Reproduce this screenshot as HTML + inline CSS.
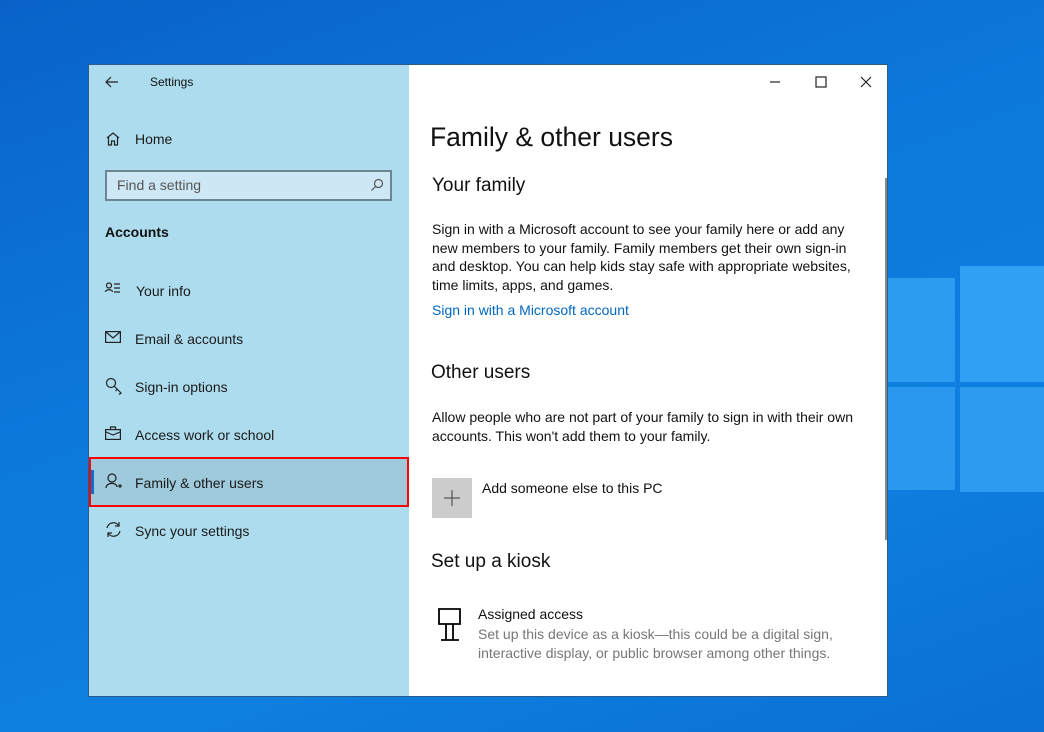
<!DOCTYPE html>
<html><head><style>
*{margin:0;padding:0;box-sizing:border-box}
body{width:1044px;height:732px;overflow:hidden;position:relative;font-family:"Liberation Sans",sans-serif;background:linear-gradient(160deg,#0a62c9 0%,#0c78dc 40%,#0e7fe0 70%,#0b6fd5 100%)}
.p{position:absolute;background:#2a9af0}
.win{position:absolute;left:88px;top:64px;width:800px;height:633px;border:1px solid #2b5d88;background:#fff}
.left{position:absolute;left:0;top:0;width:320px;height:631px;background:#addcee}
.t{position:absolute;white-space:nowrap;color:#111}
.nav{position:absolute;left:46px;font-size:14px;color:#1a1a1a}
.ic{position:absolute;left:16px}
svg{fill:none;stroke:#222;stroke-width:1.2}
</style></head><body>
<div class="p" style="left:888px;top:278px;width:67px;height:104px;background:#2c9cf1"></div>
<div class="p" style="left:960px;top:266px;width:84px;height:116px;background:#2fa0f3"></div>
<div class="p" style="left:888px;top:387px;width:67px;height:103px;background:#2a98ef"></div>
<div class="p" style="left:960px;top:387px;width:84px;height:105px;background:#2c9bf0"></div>
<div class="win">
 <div class="left">
  <svg class="ic" style="left:16px;top:10px" width="14" height="14" viewBox="0 0 14 14"><path d="M13 7H1M6 2L1 7l5 5"/></svg>
  <div class="t" style="left:61px;top:10px;font-size:12px">Settings</div>
  <svg class="ic" style="top:66px" width="16" height="16" viewBox="0 0 16 16"><path d="M2 7L8 2l6 5M3.5 6v8h3v-4h3v4h3V6"/></svg>
  <div class="nav" style="top:66px">Home</div>
  <div style="position:absolute;left:16px;top:105px;width:287px;height:31px;border:2px solid #6b8594;background:#cde8f4"></div>
  <div class="t" style="left:28px;top:112px;font-size:14px;color:#555">Find a setting</div>
  <svg class="ic" style="left:281px;top:113px" width="14" height="14" viewBox="0 0 14 14"><circle cx="8.5" cy="5.5" r="4" stroke="#555"/><path d="M5.5 8.5L1.5 12.5" stroke="#555"/></svg>
  <div class="t" style="left:16px;top:159px;font-size:14px;font-weight:bold">Accounts</div>
  <svg class="ic" style="top:217px" width="16" height="14" viewBox="0 0 16 14"><circle cx="4" cy="3.5" r="2.5"/><path d="M0.5 10c0-3 7-3 7 0M9 2h6M9 6h6M9 10h6"/></svg>
  <div class="nav" style="top:218px;left:47px">Your info</div>
  <svg class="ic" style="top:266px" width="16" height="12" viewBox="0 0 16 12"><rect x="0.6" y="0.6" width="14.8" height="10.8"/><path d="M1 1l7 6 7-6"/></svg>
  <div class="nav" style="top:266px">Email &amp; accounts</div>
  <svg class="ic" style="top:312px" width="18" height="18" viewBox="0 0 18 18"><circle cx="6" cy="6" r="4.5"/><path d="M9 9l7 7-2 1.5M12 12.5l-1.5 1.5"/></svg>
  <div class="nav" style="top:314px">Sign-in options</div>
  <svg class="ic" style="top:361px" width="16" height="14" viewBox="0 0 16 14"><rect x="0.6" y="3.6" width="14.8" height="9.8"/><path d="M5.5 3.5V1h5v2.5M1 6l7 3 7-3"/></svg>
  <div class="nav" style="top:362px">Access work or school</div>
 </div>
 <div style="position:absolute;left:0;top:392px;width:320px;height:50px;background:#9fcadb;border:2px solid #f00"></div>
 <div style="position:absolute;left:2px;top:405px;width:3px;height:24px;background:#0a6fd0"></div>
 <svg class="ic" style="top:408px" width="18" height="18" viewBox="0 0 18 18"><circle cx="7" cy="5" r="4"/><path d="M1 15c0-6 11-6 11-1M13 13h4M15 11v4"/></svg>
 <div class="nav" style="top:410px">Family &amp; other users</div>
 <svg class="ic" style="top:456px" width="17" height="17" viewBox="0 0 17 17"><path d="M2 7a6.5 6.5 0 0 1 12-2M15 10a6.5 6.5 0 0 1-12 2M14 1v4h-4M3 16v-4h4"/></svg>
 <div class="nav" style="top:458px">Sync your settings</div>

 <svg style="position:absolute;left:680px;top:11px" width="12" height="12" viewBox="0 0 12 12"><path d="M1 6h10"/></svg>
 <svg style="position:absolute;left:726px;top:11px" width="12" height="12" viewBox="0 0 12 12"><rect x="1" y="1" width="10" height="10"/></svg>
 <svg style="position:absolute;left:771px;top:11px" width="12" height="12" viewBox="0 0 12 12"><path d="M1 1l10 10M11 1L1 11"/></svg>
 <div style="position:absolute;left:796px;top:113px;width:2px;height:362px;background:#888"></div>

 <div class="t" style="left:341px;top:57px;font-size:26.5px;color:#111">Family &amp; other users</div>
 <div class="t" style="left:343px;top:110px;font-size:19px">Your family</div>
 <div class="t" style="left:343px;top:155px;font-size:14px;line-height:18.7px;color:#111">Sign in with a Microsoft account to see your family here or add any<br>new members to your family. Family members get their own sign-in<br>and desktop. You can help kids stay safe with appropriate websites,<br>time limits, apps, and games.</div>
 <div class="t" style="left:343px;top:237px;font-size:14px;color:#0067c0">Sign in with a Microsoft account</div>
 <div class="t" style="left:342px;top:297px;font-size:19px">Other users</div>
 <div class="t" style="left:343px;top:343px;font-size:14px;line-height:18.7px">Allow people who are not part of your family to sign in with their own<br>accounts. This won't add them to your family.</div>
 <div style="position:absolute;left:343px;top:413px;width:40px;height:40px;background:#ccc"></div>
 <svg style="position:absolute;left:355px;top:425px" width="16" height="16" viewBox="0 0 16 16"><path d="M8 0v16M0 8h16" stroke="#555"/></svg>
 <div class="t" style="left:393px;top:415px;font-size:14px">Add someone else to this PC</div>
 <div class="t" style="left:342px;top:486px;font-size:19px">Set up a kiosk</div>
 <svg style="position:absolute;left:349px;top:543px" width="24" height="34" viewBox="0 0 24 34"><path d="M1 1h21v15H1zM8 16v16M15 16v16M3 32h18" stroke="#000" stroke-width="1.8"/></svg>
 <div class="t" style="left:389px;top:541px;font-size:14px">Assigned access</div>
 <div class="t" style="left:389px;top:560px;font-size:14px;line-height:18.7px;color:#777">Set up this device as a kiosk—this could be a digital sign,<br>interactive display, or public browser among other things.</div>
</div>
</body></html>
